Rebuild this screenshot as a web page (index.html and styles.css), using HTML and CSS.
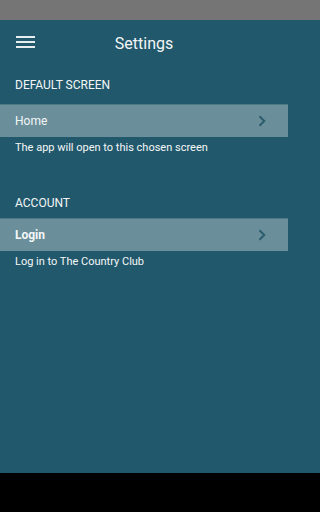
FILE: index.html
```html
<!DOCTYPE html>
<html>
<head>
<meta charset="utf-8">
<link rel="stylesheet" href="styles.css">
</head>
<body>
<div class="screen">
  <div class="statusbar"></div>
  <div class="app">
    <div class="content">
      <header class="toolbar">
        <svg class="menu" width="20" height="14" viewBox="0 0 20 14">
          <rect x="0" y="0" width="19" height="2" fill="#e6eef0"/>
          <rect x="0" y="5" width="19" height="2" fill="#e6eef0"/>
          <rect x="0" y="10" width="19" height="2" fill="#e6eef0"/>
        </svg>
        <div class="title">Settings</div>
      </header>
      <div class="section-title">DEFAULT SCREEN</div>
      <div class="row">
        <span class="row-label">Home</span>
        <svg class="chev" width="8" height="12" viewBox="0 0 8 12"><path d="M1.5 1.2 L6.3 6 L1.5 10.8" fill="none" stroke="#2b5d6d" stroke-width="2"/></svg>
      </div>
      <div class="help">The app will open to this chosen screen</div>
      <div class="section-title account">ACCOUNT</div>
      <div class="row">
        <span class="row-label bold">Login</span>
        <svg class="chev" width="8" height="12" viewBox="0 0 8 12"><path d="M1.5 1.2 L6.3 6 L1.5 10.8" fill="none" stroke="#2b5d6d" stroke-width="2"/></svg>
      </div>
      <div class="help">Log in to The Country Club</div>
    </div>
  </div>
  <div class="navbar"></div>
</div>
</body>
</html>
```
FILE: styles.css
```css
html, body {
  margin: 0;
  padding: 0;
  background: #000;
}
body {
  font-family: Roboto, "Noto Sans", sans-serif;
  color: #ffffff;
}
.screen {
  width: 100%;
  height: 512px;
  display: flex;
  flex-direction: column;
  background: #000;
}
.statusbar {
  height: 20px;
  background: #757575;
}
.app {
  height: 453px;
  background: #22586b;
}
.content {
  width: 288px;
  display: flex;
  flex-direction: column;
}
.toolbar {
  height: 46px;
  position: relative;
  display: flex;
  align-items: center;
  justify-content: center;
}
.menu {
  position: absolute;
  left: 16px;
  top: 16px;
}
.title {
  font-size: 16px;
  color: #f2f6f7;
}
.section-title {
  font-size: 12px;
  padding: 0 15px;
  height: 38px;
  line-height: 38px;
  color: #f2f6f7;
}
.section-title.account {
  margin-top: 31px;
  height: 30px;
  line-height: 30px;
}
.row {
  height: 32px;
  background: #6a8e9a;
  border-top: 1px solid #4d7886;
  display: flex;
  align-items: center;
  justify-content: space-between;
  padding: 0 22px 0 15px;
}
.row-label {
  font-size: 12px;
  color: #f4f7f8;
}
.row-label.bold {
  font-weight: bold;
}
.help {
  font-size: 11px;
  padding: 2px 15px 0;
  height: 18px;
  line-height: 18px;
  color: #f4f7f8;
}
.navbar {
  flex: 1;
  background: #000;
}
```
